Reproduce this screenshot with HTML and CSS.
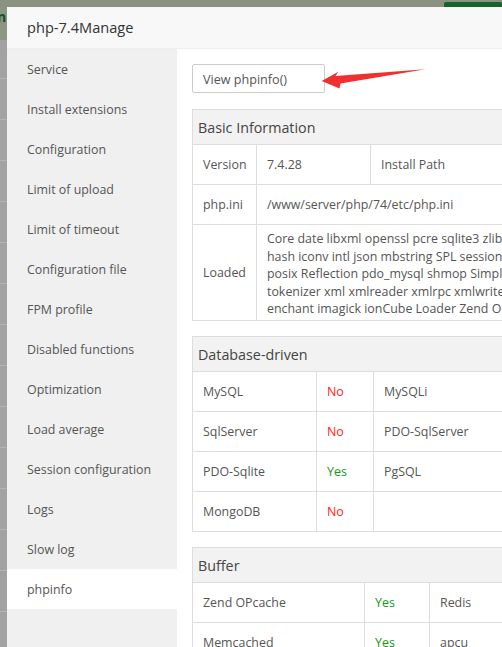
FILE: index.html
```html
<!DOCTYPE html>
<html>
<head>
<meta charset="utf-8">
<link rel="stylesheet" href="styles.css">
</head>
<body>
<div class="topbar"><div class="top-btn"></div></div>
<div class="leftstrip"><span class="peek">n</span></div>
<div class="modal">
  <div class="modal-title">php-7.4Manage</div>
  <div class="modal-body">
    <div class="sidebar">
      <div class="nav-item">Service</div>
      <div class="nav-item">Install extensions</div>
      <div class="nav-item">Configuration</div>
      <div class="nav-item">Limit of upload</div>
      <div class="nav-item">Limit of timeout</div>
      <div class="nav-item">Configuration file</div>
      <div class="nav-item">FPM profile</div>
      <div class="nav-item">Disabled functions</div>
      <div class="nav-item">Optimization</div>
      <div class="nav-item">Load average</div>
      <div class="nav-item">Session configuration</div>
      <div class="nav-item">Logs</div>
      <div class="nav-item">Slow log</div>
      <div class="nav-item active">phpinfo</div>
    </div>
    <div class="content">
      <button class="btn-view">View phpinfo()</button>
      <svg class="arrow" width="110" height="30" viewBox="0 0 110 30"><polygon points="1.7,17 18.3,7.7 15.5,12 105.5,5.2 20.5,19.5 19.5,24.5" fill="#f0302e"/></svg>

      <table class="info t1">
        <colgroup><col class="c64"><col class="c114"><col class="c150"><col></colgroup>
        <tr><th colspan="4">Basic Information</th></tr>
        <tr><td>Version</td><td>7.4.28</td><td>Install Path</td><td>/www/server/php/74</td></tr>
        <tr><td>php.ini</td><td colspan="3">/www/server/php/74/etc/php.ini</td></tr>
        <tr><td>Loaded</td><td colspan="3" class="loaded">Core date libxml openssl pcre sqlite3 zlib bcmath ctype curl dom fileinfo filter ftp gd<br>hash iconv intl json mbstring SPL session PDO pdo_sqlite Phar<br>posix Reflection pdo_mysql shmop SimpleXML soap sockets sodium standard<br>tokenizer xml xmlreader xmlrpc xmlwriter xsl zip mysqlnd<br>enchant imagick ionCube Loader Zend OPcache</td></tr>
      </table>

      <table class="info t2">
        <colgroup><col class="c124"><col class="c57"><col class="c160"><col></colgroup>
        <tr><th colspan="4">Database-driven</th></tr>
        <tr><td>MySQL</td><td class="no">No</td><td>MySQLi</td><td class="yes">Yes</td></tr>
        <tr><td>SqlServer</td><td class="no">No</td><td>PDO-SqlServer</td><td class="no">No</td></tr>
        <tr><td>PDO-Sqlite</td><td class="yes">Yes</td><td>PgSQL</td><td class="no">No</td></tr>
        <tr><td>MongoDB</td><td class="no">No</td><td></td><td></td></tr>
      </table>

      <table class="info t3">
        <colgroup><col class="c172"><col class="c65"><col class="c150"><col></colgroup>
        <tr><th colspan="4">Buffer</th></tr>
        <tr><td>Zend OPcache</td><td class="yes">Yes</td><td>Redis</td><td class="yes">Yes</td></tr>
        <tr><td>Memcached</td><td class="yes">Yes</td><td>apcu</td><td class="no">No</td></tr>
      </table>
    </div>
  </div>
</div>
</body>
</html>
```

FILE: styles.css
```css
* { box-sizing: border-box; }
html, body { margin: 0; height: 100%; overflow: hidden; }
body {
  font-family: "Open Sans", "Noto Sans", sans-serif;
  font-size: 12.4px;
  color: #555;
  display: grid;
  grid-template-columns: 7px 1fr;
  grid-template-rows: 7px 1fr;
  background: #9e9e9e;
}
.topbar {
  grid-column: 1 / 3;
  background: #8b9380;
  display: flex;
  justify-content: flex-end;
  align-items: flex-end;
}
.top-btn { width: 58px; height: 5px; background: #13652b; border-radius: 2px 2px 0 0; }
.leftstrip {
  position: relative;
  overflow: hidden;
  background:
    linear-gradient(#8c9582, #8c9582) top / 100% 33px no-repeat,
    repeating-linear-gradient(to bottom, #a2a2a2 0, #a2a2a2 40px, #b4b4b4 40px, #b4b4b4 41px);
  background-position: 0 0, 0 31px;
}
.peek {
  position: absolute;
  left: -3px;
  top: 0;
  font-weight: bold;
  color: #1e4d25;
  font-size: 14px;
}
.modal { background: #fff; display: flex; flex-direction: column; min-width: 0; }
.modal-title {
  height: 42px;
  line-height: 41px;
  padding-left: 20px;
  font-size: 14.6px;
  color: #333;
  background: #f8f8f8;
  border-bottom: 1px solid #eee;
  flex-shrink: 0;
}
.modal-body { flex: 1; display: flex; min-height: 0; }
.sidebar { width: 170px; background: #f0f0f0; flex-shrink: 0; }
.nav-item { height: 40px; line-height: 38px; padding: 2px 0 0 20px; color: #555; white-space: nowrap; }
.nav-item.active { background: #fff; }
.content { flex: 1; padding: 15px; position: relative; overflow: hidden; min-width: 0; }
.btn-view {
  display: block;
  width: 133px;
  height: 29px;
  padding: 2px 10px 0;
  text-align: left;
  border: 1px solid #ccc;
  border-radius: 2px;
  background: #fff;
  color: #555;
  font-family: inherit;
  font-size: 12.6px;
  margin-bottom: 16px;
}
.arrow { position: absolute; left: 143px; top: 15px; }
.info {
  border-collapse: collapse;
  table-layout: fixed;
  width: 620px;
  margin-bottom: 15px;
}
.info th {
  text-align: left;
  font-weight: normal;
  font-size: 14.3px;
  color: #444;
  background: #f2f2f2;
  line-height: 33px;
  padding: 1px 5px 0;
  border: 1px solid #ddd;
}
.info td {
  border: 1px solid #ddd;
  line-height: 39px;
  padding: 0 10px;
  white-space: nowrap;
  overflow: hidden;
  vertical-align: middle;
}
.info td.loaded { line-height: 17.6px; padding: 5px 10px 2px; }
.c64 { width: 64px; }
.c114 { width: 114px; }
.c150 { width: 150px; }
.c124 { width: 124px; }
.c57 { width: 57px; }
.c160 { width: 160px; }
.c172 { width: 172px; }
.c65 { width: 65px; }
.no { color: #f22; }
.yes { color: #119a11; }
```
